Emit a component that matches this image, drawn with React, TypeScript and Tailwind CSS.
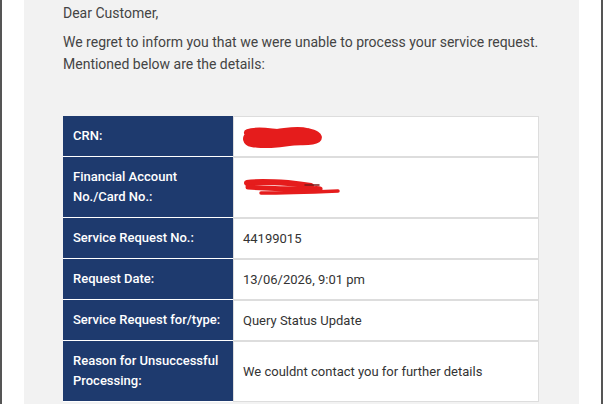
import React from "react";

const rows: { label: React.ReactNode; value: React.ReactNode; tall?: boolean }[] = [
  { label: "CRN:", value: "crn" },
  { label: <>Financial Account<br />No./Card No.:</>, value: "acct", tall: true },
  { label: "Service Request No.:", value: "44199015" },
  { label: "Request Date:", value: "13/06/2026, 9:01 pm" },
  { label: "Service Request for/type:", value: "Query Status Update" },
  { label: <>Reason for Unsuccessful<br />Processing:</>, value: "We couldnt contact you for further details", tall: true },
];

function Scribble1() {
  return (
    <svg width="80" height="22" viewBox="0 0 80 22" className="block">
      <path d="M5 7 C14 4, 24 6, 34 7 C44 6, 54 3, 64 6 C72 8, 77 10, 74 13 C68 17, 56 14, 46 16 C34 18, 20 19, 9 17 C3 16, 3 11, 6 10 C16 9, 30 12, 44 11 C56 10, 64 11, 72 12"
        fill="none" stroke="#e51c1c" strokeWidth="8" strokeLinecap="round" strokeLinejoin="round" />
    </svg>
  );
}

function Scribble2() {
  return (
    <svg width="100" height="22" viewBox="0 0 100 22" className="block">
      <path d="M4 6 C15 4, 30 5, 45 6 C55 7, 62 8, 68 9" fill="none" stroke="#e51c1c" strokeWidth="6" strokeLinecap="round" />
      <path d="M5 10 C20 11, 40 12, 62 12 C70 12, 75 11, 77 12" fill="none" stroke="#e51c1c" strokeWidth="5" strokeLinecap="round" />
      <path d="M18 16 C40 16, 70 15, 95 14" fill="none" stroke="#e51c1c" strokeWidth="3.5" strokeLinecap="round" />
      <path d="M62 8 L76 8" fill="none" stroke="#7a1a1a" strokeWidth="1.5" strokeLinecap="round" />
    </svg>
  );
}

export default function App() {
  return (
    <div
      className="w-[605px] h-[404px] overflow-hidden bg-white"
      style={{ fontFamily: "Roboto, 'Liberation Sans', sans-serif" }}
    >
      <div className="w-[603px] h-[404px] border-l-2 border-r-2 border-[#555555] px-[22px]">
        <div className="h-full bg-[#f2f2f2] pl-[39px] pr-[40px] pt-[2px] text-[14px] leading-[22px] text-[#444444]">
          <p>Dear Customer,</p>
          <p className="mt-[7px]">
            We regret to inform you that we were unable to process your service request.
            <br />
            Mentioned below are the details:
          </p>
          <div className="mt-[41px] w-[476px] bg-white">
            {rows.map((r, i) => (
              <div key={i} className="flex">
                <div className="w-[170px] shrink-0 bg-[#1e3a6e] border-b border-white px-[10px] py-[10px] text-[13px] leading-[20px] font-medium text-white">
                  {r.label}
                </div>
                <div className="flex-1 flex items-center border border-[#dddddd] px-[9px] text-[13px] leading-[20px] text-[#333333]">
                  {r.value === "crn" ? (
                    <Scribble1 />
                  ) : r.value === "acct" ? (
                    <Scribble2 />
                  ) : (
                    r.value
                  )}
                </div>
              </div>
            ))}
          </div>
        </div>
      </div>
    </div>
  );
}
